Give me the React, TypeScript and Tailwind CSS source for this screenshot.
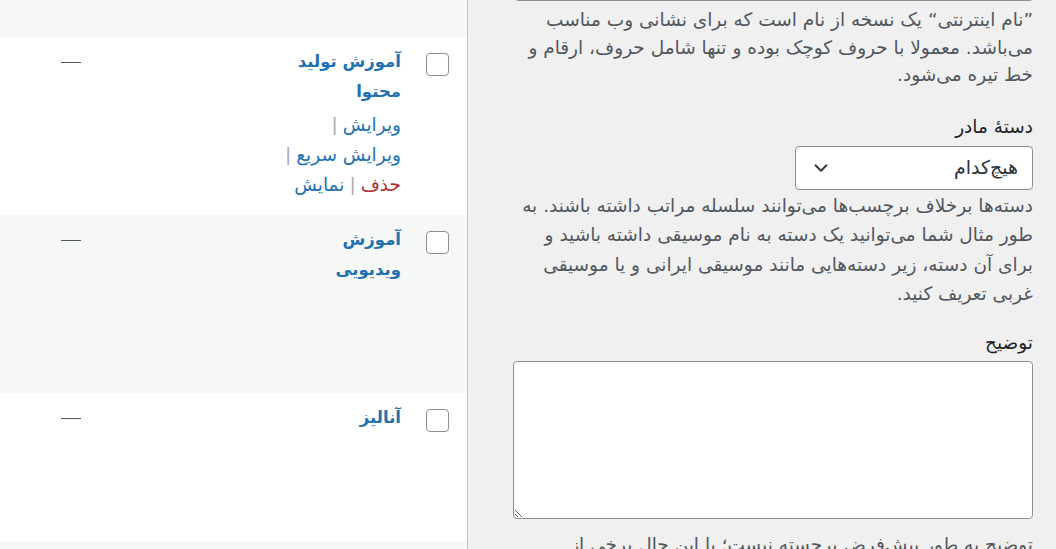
import { ChevronDown } from 'lucide-react';

type Row = {
    title: string[];
    striped: boolean;
    showActions: boolean;
};

const rows: Row[] = [
    { title: ['آموزش تولید', 'محتوا'], striped: false, showActions: true },
    { title: ['آموزش', 'ویدیویی'], striped: true, showActions: false },
    { title: ['آنالیز'], striped: false, showActions: false },
];

function Sep() {
    return <span className="text-[#a7aaad] mx-[5px]">|</span>;
}

function CategoryRow({ row }: { row: Row }) {
    return (
        <div className={`flex pt-[10px] pb-[15px] ${row.striped ? 'bg-[#f6f7f7]' : 'bg-white'}`}>
            <div className="w-[66px] shrink-0 pr-[18px] pt-[6px]">
                <div className="w-[23px] h-[23px] rounded-[4px] border border-[#8c8f94] bg-white" />
            </div>
            <div className="w-[150px] shrink-0">
                <div className="text-[16.5px] leading-[30px] font-bold text-[#2271b1]">
                    {row.title.map((t) => (
                        <div key={t} className="whitespace-nowrap">{t}</div>
                    ))}
                </div>
                <div className={`mt-[3px] text-[18.5px] leading-[30px] text-[#2271b1] ${row.showActions ? '' : 'invisible'}`}>
                    <div className="whitespace-nowrap">ویرایش<Sep /></div>
                    <div className="whitespace-nowrap">ویرایش سریع<Sep /></div>
                    <div className="whitespace-nowrap">
                        <span className="text-[#b32d2e]">حذف</span>
                        <Sep />
                        نمایش
                    </div>
                </div>
            </div>
            <div className="flex-1" />
            <div className="w-[81px] shrink-0 h-[30px] flex items-center">
                <span className="w-[20px] h-px bg-[#50575e]" />
            </div>
        </div>
    );
}

export default function App() {
    return (
        <div
            dir="rtl"
            className="h-[549px] w-[1056px] overflow-hidden flex bg-[#f0f0f1] text-[#3c434a]"
            style={{ fontFamily: '"DejaVu Sans", sans-serif' }}
        >
            {/* form column */}
            <div className="w-[588px] shrink-0 pr-[23px] pl-[47px]">
                <div className="h-[5px] -mt-[4px] rounded-b-[4px] border border-t-0 border-[#8c8f94] bg-white" />
                <p className="mt-[5px] text-[18.5px] leading-[27.5px] text-[#50575e]">
                    ”نام اینترنتی“ یک نسخه از نام است که برای نشانی وب مناسب می‌باشد. معمولا با حروف کوچک بوده و تنها شامل حروف، ارقام و خط تیره می‌شود.
                </p>

                <label className="block mt-[24px] text-[18.5px] leading-[28px] text-[#1d2327]">دستهٔ مادر</label>
                <div className="mt-[5px] w-[238px] h-[44px] rounded-[4px] border border-[#8c8f94] bg-white flex items-center justify-between pr-[14px] pl-[14px] text-[19px] text-[#2c3338]">
                    <span>هیچ‌کدام</span>
                    <ChevronDown size={22} strokeWidth={2} className="text-[#2c3338]" />
                </div>
                <p className="mt-[1px] text-[18.5px] leading-[29.5px] text-[#50575e]">
                    دسته‌ها برخلاف برچسب‌ها می‌توانند سلسله مراتب داشته باشند. به طور مثال شما می‌توانید یک دسته به نام موسیقی داشته باشید و برای آن دسته، زیر دسته‌هایی مانند موسیقی ایرانی و یا موسیقی غربی تعریف کنید.
                </p>

                <label className="block mt-[20px] text-[18.5px] leading-[28px] text-[#1d2327]">توضیح</label>
                <textarea
                    className="block mt-[4px] w-[520px] -ml-[2px] h-[158px] rounded-[4px] border border-[#8c8f94] bg-white outline-none"
                    defaultValue=""
                />
                <p className="mt-[12px] text-[18.5px] leading-[28px] text-[#50575e]">
                    توضیح به طور پیش‌فرض برجسته نیست؛ با این حال برخی از پوسته‌ها ممکن است آن را نمایش دهند.
                </p>
            </div>

            {/* list table */}
            <div className="flex-1 border-r border-[#c3c4c7] bg-white">
                <div className="h-[37px] bg-[#f6f7f7]" />
                {rows.map((row, i) => (
                    <CategoryRow key={i} row={row} />
                ))}
                <div className="h-[40px] bg-[#f6f7f7]" />
            </div>
        </div>
    );
}
